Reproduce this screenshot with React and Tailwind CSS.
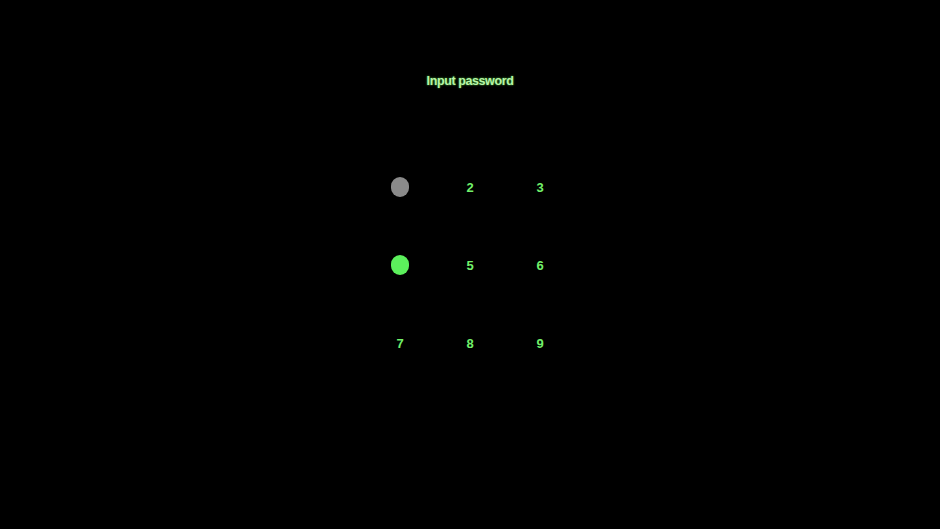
export default function App() {
  const keys = [1, 2, 3, 4, 5, 6, 7, 8, 9];
  return (
    <div className="w-full h-[529px] bg-black flex flex-col items-center pt-[73px]" style={{ fontFamily: "'Liberation Sans', sans-serif" }}>
      <h1
        className="text-[12.5px] leading-[16px] font-bold text-[#b8f5a8] tracking-[-0.4px]"
        style={{ textShadow: "0 0 1px #1f5a1a, 0 0 2px #4fc040" }}
      >
        Input password
      </h1>
      <div className="grid grid-cols-[70px_70px_70px] auto-rows-[78px] mt-[59px]">
        {keys.map((k) => (
          <div key={k} className="flex items-center justify-center">
            {k === 1 ? (
              <span className="w-[18px] h-[20px] rounded-full bg-[#8a8a8a]" />
            ) : k === 4 ? (
              <span className="w-[18px] h-[20px] rounded-full bg-[#5cf05c]" />
            ) : (
              <span className="text-[13px] leading-[14px] pt-[2px] font-bold text-[#72f06a]">{k}</span>
            )}
          </div>
        ))}
      </div>
    </div>
  );
}
